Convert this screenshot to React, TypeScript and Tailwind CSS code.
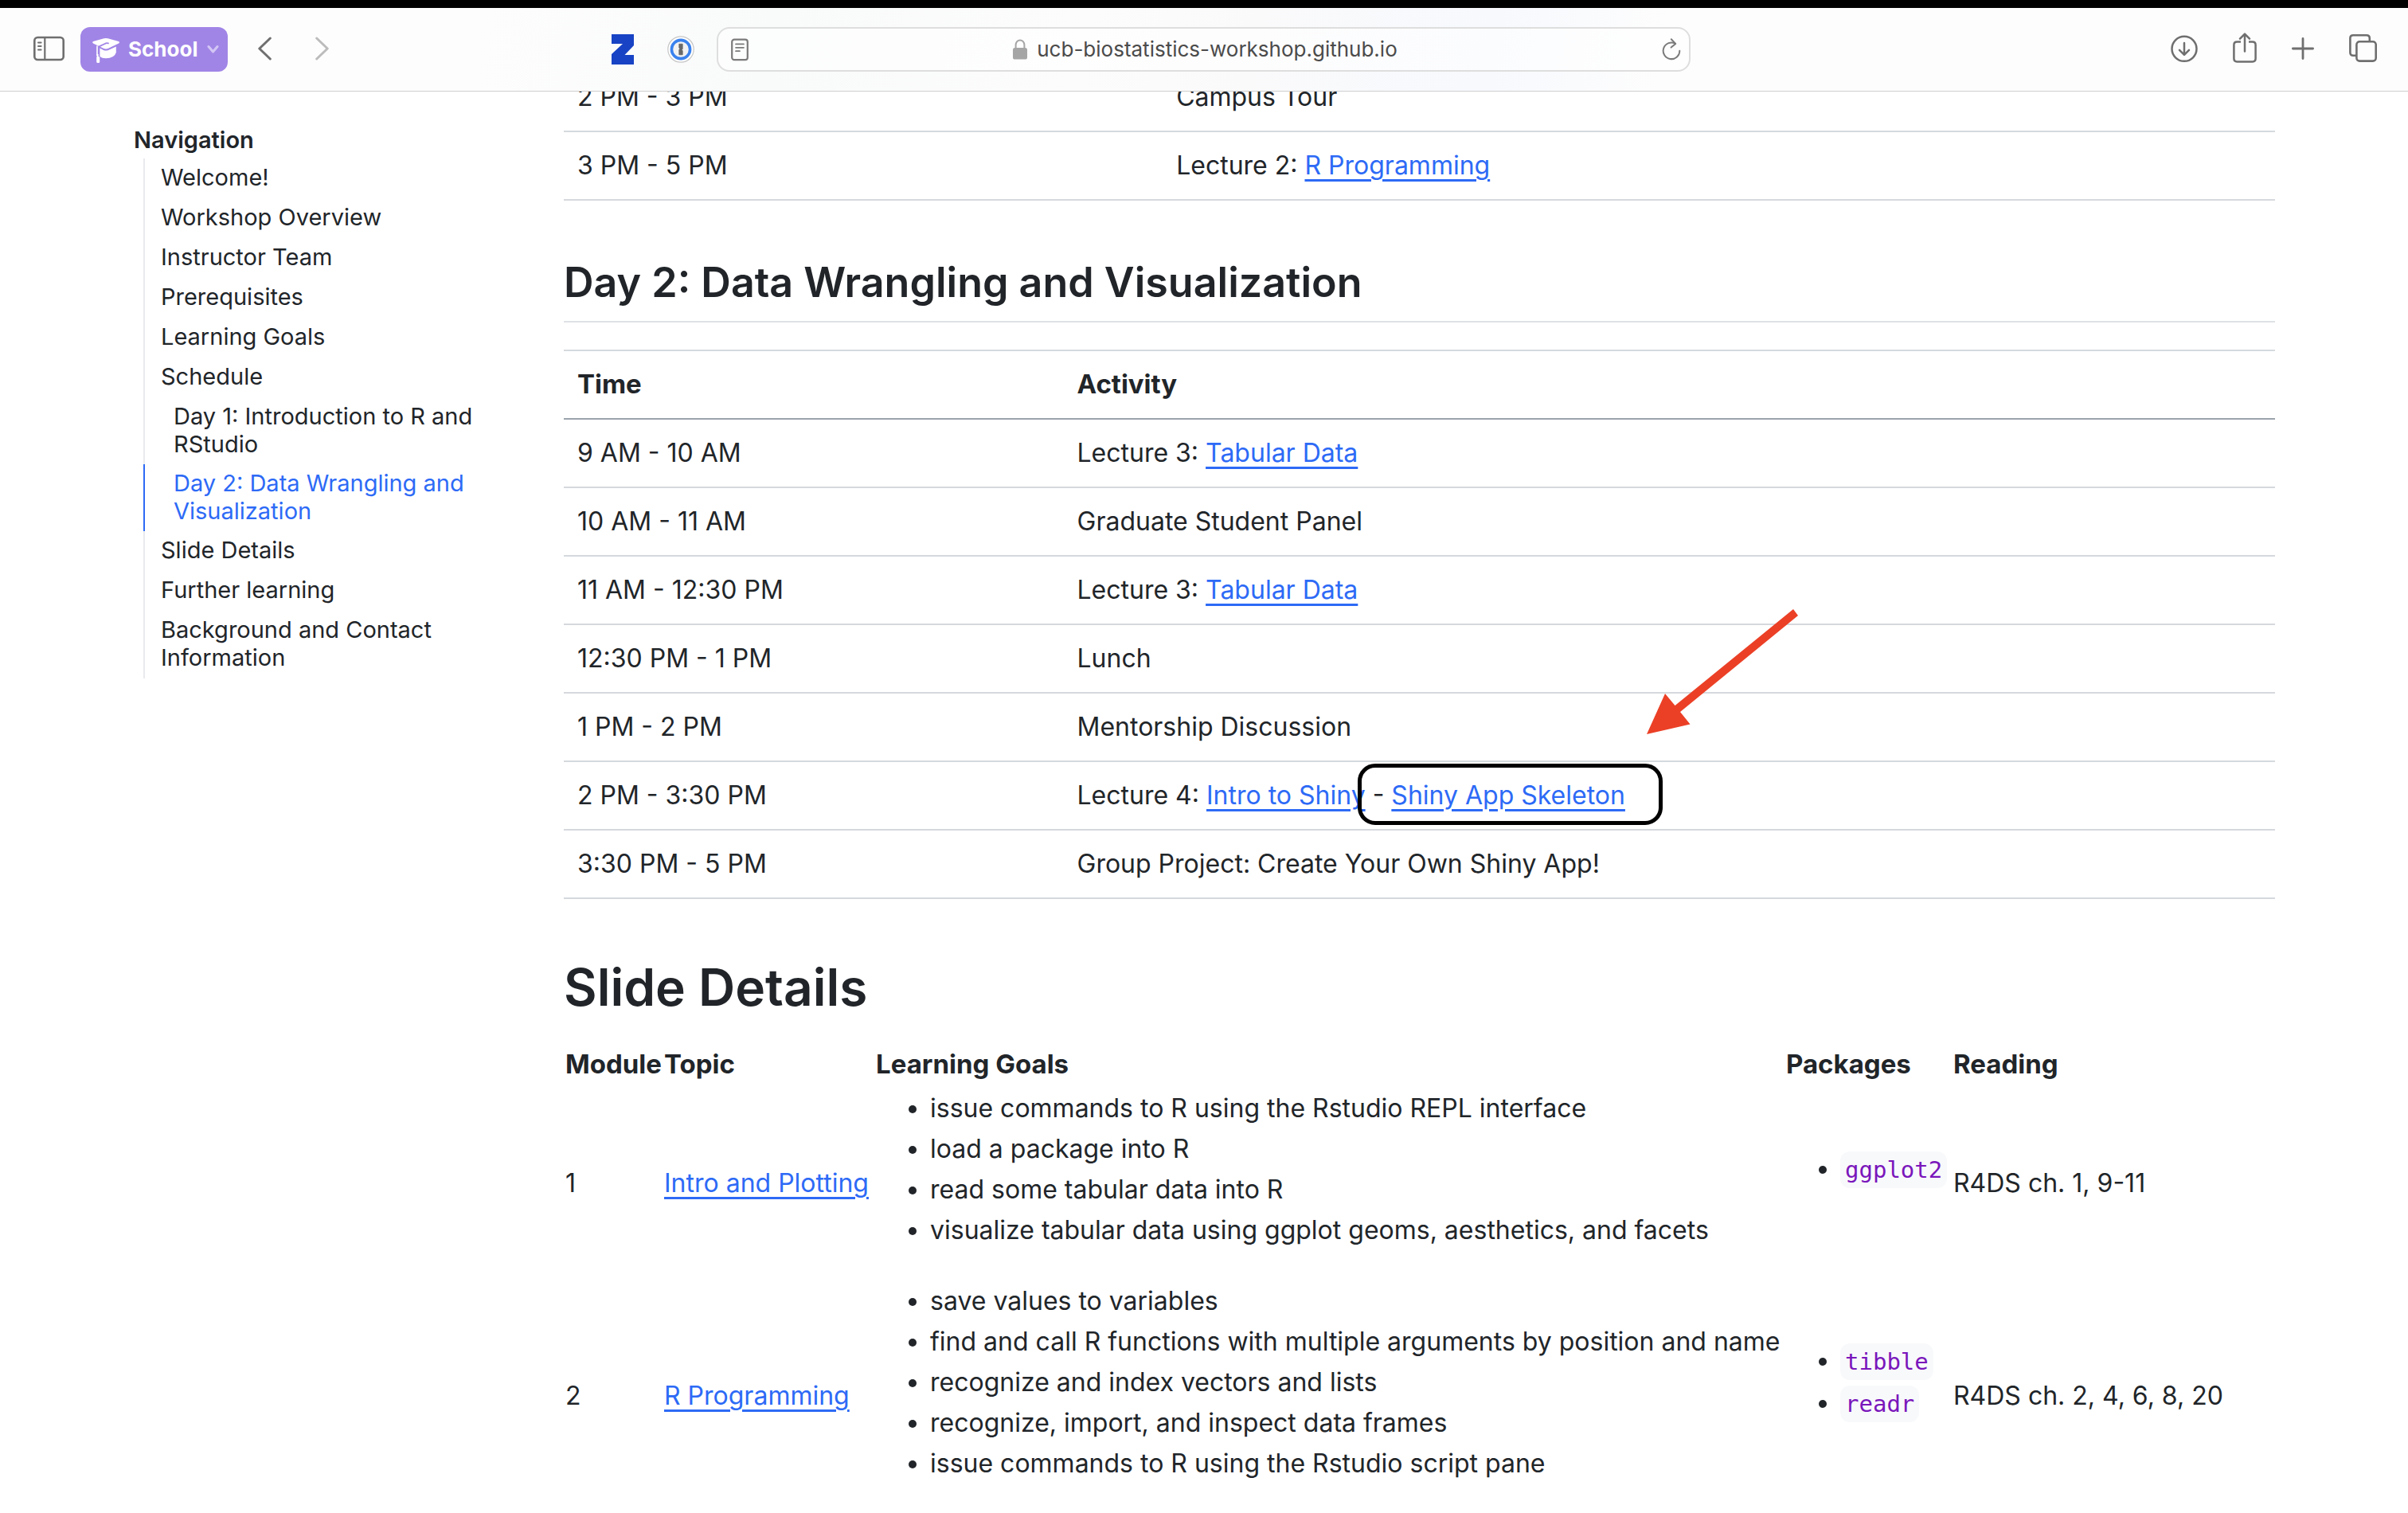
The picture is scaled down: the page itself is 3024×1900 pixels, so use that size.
import type { ReactNode } from "react";

const linkClass =
  "text-[#2d6af6] underline decoration-[3px] underline-offset-[6px]";

function Link({ children }: { children: ReactNode }) {
  return (
    <a href="#" className={linkClass}>
      {children}
    </a>
  );
}

/* ---------- toolbar icons ---------- */

function SidebarIcon() {
  return (
    <svg width="39" height="40" viewBox="0 0 39 40" fill="none" stroke="#6f6f6f" strokeLinecap="round">
      <rect x="1.3" y="5" width="36.4" height="28" rx="4" strokeWidth="2.6" />
      <path d="M14.3 5v28" strokeWidth="2.2" />
      <path d="M6 11.4h3.6M6 16h3.6M6 20.6h3.6" strokeWidth="2" />
    </svg>
  );
}

function GraduationIcon() {
  return (
    <svg width="34" height="40" viewBox="0 0 34 40" fill="none">
      <path d="M1 12.4Q-.6 11 1 9.9L14.5 6.3Q17 5.6 19.5 6.3L33 9.9Q34.8 11 33 12.6L20 18.8Q17 20.2 14 18.8Z" fill="#fff" />
      <path d="M9.4 18.6L14 20.9Q17 22.3 20 20.9L29.8 16.4V24Q27.5 31.2 17 31.2Q12 31.2 9.4 29Z" fill="#fff" />
      <path d="M20 12.4Q17.6 11.6 15.6 13L8 16.6" stroke="#a185e6" strokeWidth="1.8" strokeLinecap="round" />
      <path d="M6 15.6V28" stroke="#fff" strokeWidth="1.6" />
      <rect x="5.2" y="29" width="4" height="8" rx="1.6" fill="#fff" />
      <path d="M6.6 26v4" stroke="#fff" strokeWidth="2" />
    </svg>
  );
}

function SmallChevron() {
  return (
    <svg width="15" height="12" viewBox="0 0 15 12" fill="none" stroke="#d3c6f5" strokeWidth="3" strokeLinecap="round" strokeLinejoin="round">
      <path d="M2 2.5l5.5 6.5L13 2.5" />
    </svg>
  );
}

function BackIcon() {
  return (
    <svg width="17" height="40" viewBox="0 0 17 40" fill="none" stroke="#6f6f6f" strokeWidth="3" strokeLinecap="round" strokeLinejoin="round">
      <path d="M15.3 6L1.8 19L15.3 32" />
    </svg>
  );
}

function ForwardIcon() {
  return (
    <svg width="17" height="40" viewBox="0 0 17 40" fill="none" stroke="#bcbcbc" strokeWidth="3" strokeLinecap="round" strokeLinejoin="round">
      <path d="M1.7 6L15.2 19L1.7 32" />
    </svg>
  );
}

function ZLogo() {
  return (
    <svg width="28" height="38" viewBox="0 0 28 38" fill="#1843c4">
      <path d="M0 0H28V14L16.5 26H28V38H0V25L14 12H0Z" />
    </svg>
  );
}

function KeyholeLogo() {
  return (
    <svg width="34" height="34" viewBox="0 0 34 34">
      <circle cx="17" cy="17" r="16.2" fill="#fff" stroke="#c6c6c6" strokeWidth="1.2" />
      <circle cx="17" cy="17" r="11.6" fill="#f2f2f2" stroke="#3a82ee" strokeWidth="3.6" />
      <path d="M14.8 10.2H19.2V16.4L18.2 17.6L19.2 18.8V23.8H14.8V17.4L15.8 16.2L14.8 15Z" fill="#6a6a6a" stroke="#505050" strokeWidth=".6" />
    </svg>
  );
}

function ReaderIcon() {
  return (
    <svg width="22" height="40" viewBox="0 0 22 40" fill="none" stroke="#7b7b7b" strokeLinecap="round">
      <rect x="1.2" y="7.6" width="19.6" height="25.6" rx="3" strokeWidth="2.2" />
      <path d="M6 13.4h10M6 17.8h10M6 22.2h5" strokeWidth="1.7" />
    </svg>
  );
}

function LockIcon() {
  return (
    <svg width="18" height="26" viewBox="0 0 18 26">
      <path d="M3.6 12V7.4a5.4 6 0 0 1 10.8 0V12" fill="none" stroke="#a5a5a5" strokeWidth="2" />
      <rect x="0" y="11" width="18" height="14.6" rx="2.6" fill="#a5a5a5" />
    </svg>
  );
}

function ReloadIcon() {
  return (
    <svg width="24" height="40" viewBox="0 0 24 40" fill="none" stroke="#7b7b7b" strokeWidth="2" strokeLinecap="round" strokeLinejoin="round">
      <path d="M17 12.8A10.3 10.3 0 1 0 22.3 21.8" />
      <path d="M11.8 7.2L17.2 12.9L11.6 17.6" />
    </svg>
  );
}

function DownloadIcon() {
  return (
    <svg width="34" height="40" viewBox="0 0 34 40" fill="none" stroke="#6f6f6f" strokeWidth="2.5" strokeLinecap="round" strokeLinejoin="round">
      <circle cx="17" cy="19.3" r="15.5" />
      <path d="M17 12v14.4M11 20.8l6 6l6-6" />
    </svg>
  );
}

function ShareIcon() {
  return (
    <svg width="30" height="42" viewBox="0 0 30 42" fill="none" stroke="#6f6f6f" strokeWidth="2.5" strokeLinecap="round" strokeLinejoin="round">
      <path d="M10 11.6H5.2Q1.4 11.6 1.4 15.4V32.6Q1.4 36.4 5.2 36.4H24.8Q28.6 36.4 28.6 32.6V15.4Q28.6 11.6 24.8 11.6H20" strokeLinecap="butt" />
      <path d="M15 23.6V2.4M9 7.6L15 1.6L21 7.6" />
    </svg>
  );
}

function PlusIcon() {
  return (
    <svg width="28" height="40" viewBox="0 0 28 40" fill="none" stroke="#6f6f6f" strokeWidth="2.8" strokeLinecap="round">
      <path d="M14 6.4v25.2M1.4 19h25.2" />
    </svg>
  );
}

function TabsIcon() {
  return (
    <svg width="35" height="40" viewBox="0 0 35 40" fill="none" stroke="#6f6f6f" strokeWidth="2.6">
      <path d="M9 27.7H5.2Q1.4 27.7 1.4 23.9V6.1Q1.4 2.3 5.2 2.3H22Q25.8 2.3 25.8 6.1V10" />
      <rect x="9.4" y="10.3" width="24.3" height="24.3" rx="3.8" />
    </svg>
  );
}

function Toolbar() {
  return (
    <header className="shrink-0 border-t-10 border-b border-t-black border-b-[#cfcfcf]">
      <div className="grid h-[104px] grid-cols-[900fr_1223fr_901fr] items-center bg-[linear-gradient(100deg,#fdfdfd_20%,#f9fafa_32%,#fcfcfc_45%,#fafafb_52%,#f7f9fd_62%,#fdfdfd_69%)]">
        <div className="flex items-center justify-between pr-7 pl-[42px]">
          <div className="flex items-center">
            <button type="button" aria-label="Toggle sidebar">
              <SidebarIcon />
            </button>
            <button
              type="button"
              className="ml-5 flex h-14 w-[185px] items-center rounded-xl bg-[#a185e6] pr-[11px] pl-[15px] text-[26px] font-bold text-white"
            >
              <GraduationIcon />
              <span className="ml-[11px] flex-1 pb-0.5 text-left">School</span>
              <SmallChevron />
            </button>
            <button type="button" aria-label="Back" className="ml-[38px]">
              <BackIcon />
            </button>
            <button type="button" aria-label="Forward" className="ml-[55px]">
              <ForwardIcon />
            </button>
          </div>
          <div className="flex items-center gap-[42px]">
            <button type="button" aria-label="Z extension">
              <ZLogo />
            </button>
            <button type="button" aria-label="Password manager">
              <KeyholeLogo />
            </button>
          </div>
        </div>

        <div className="flex h-14 items-center justify-between rounded-2xl border-2 border-[#dedede] bg-white/50 pr-[10px] pl-4">
          <button type="button" aria-label="Show reader">
            <ReaderIcon />
          </button>
          <label className="flex items-center gap-3">
            <LockIcon />
            <input
              type="text"
              aria-label="Address"
              defaultValue="ucb-biostatistics-workshop.github.io"
              className="field-sizing-content bg-transparent text-[26px] leading-9 text-[#4b4b4b] outline-none"
            />
          </label>
          <button type="button" aria-label="Reload">
            <ReloadIcon />
          </button>
        </div>

        <div className="flex items-center justify-end gap-11 pr-[39px]">
          <button type="button" aria-label="Downloads">
            <DownloadIcon />
          </button>
          <button type="button" aria-label="Share">
            <ShareIcon />
          </button>
          <button type="button" aria-label="New tab">
            <PlusIcon />
          </button>
          <button type="button" aria-label="Tab overview">
            <TabsIcon />
          </button>
        </div>
      </div>
    </header>
  );
}

/* ---------- side navigation ---------- */

type NavItem = { label: string; nested?: boolean; active?: boolean };

const navItems: NavItem[] = [
  { label: "Welcome!" },
  { label: "Workshop Overview" },
  { label: "Instructor Team" },
  { label: "Prerequisites" },
  { label: "Learning Goals" },
  { label: "Schedule" },
  { label: "Day 1: Introduction to R and RStudio", nested: true },
  { label: "Day 2: Data Wrangling and Visualization", nested: true, active: true },
  { label: "Slide Details" },
  { label: "Further learning" },
  { label: "Background and Contact Information" },
];

function SideNav() {
  return (
    <nav aria-labelledby="nav-title" className="pt-10 text-[29px]">
      <h2 id="nav-title" className="mb-0.5 leading-[42px] font-semibold">
        Navigation
      </h2>
      <ul className="ml-3 leading-[35px]">
        {navItems.map((item) => (
          <li
            key={item.label}
            className={
              item.active
                ? "border-l-2 border-[#2d6af6] text-[#2d6af6]"
                : "border-l-2 border-[#e9eaee]"
            }
          >
            <a href="#" className={item.nested ? "block pt-1.5 pb-2 pl-9" : "block pt-1.5 pb-[9px] pl-5"}>
              {item.label}
            </a>
          </li>
        ))}
      </ul>
    </nav>
  );
}

/* ---------- schedule tables ---------- */

type Slot = { time: string; activity: ReactNode };

const dayOne: Slot[] = [
  { time: "2 PM - 3 PM", activity: "Campus Tour" },
  { time: "3 PM - 5 PM", activity: <>Lecture 2: <Link>R Programming</Link></> },
];

/* Hand-drawn callout: a rounded frame round the link and an arrow to it. */
function Callout() {
  return (
    <>
      <span className="pointer-events-none absolute top-0.5 left-[369px] h-[77px] w-[383px] rounded-[22px] border-5 border-black" />
      <svg
        className="pointer-events-none absolute -top-48 left-[732px]"
        width="190"
        height="158"
        viewBox="0 0 190 158"
        fill="#eb4026"
      >
        <path d="M0 157L23 106L35.5 121L184 0L190 8L42 129L54.5 144.5Z" />
      </svg>
    </>
  );
}

const dayTwo: Slot[] = [
  { time: "9 AM - 10 AM", activity: <>Lecture 3: <Link>Tabular Data</Link></> },
  { time: "10 AM - 11 AM", activity: "Graduate Student Panel" },
  { time: "11 AM - 12:30 PM", activity: <>Lecture 3: <Link>Tabular Data</Link></> },
  { time: "12:30 PM - 1 PM", activity: "Lunch" },
  { time: "1 PM - 2 PM", activity: "Mentorship Discussion" },
  {
    time: "2 PM - 3:30 PM",
    activity: (
      <>
        Lecture 4: <Link>Intro to Shiny</Link> - <Link>Shiny App Skeleton</Link>
        <Callout />
      </>
    ),
  },
  { time: "3:30 PM - 5 PM", activity: "Group Project: Create Your Own Shiny App!" },
];

function SlotRows({ slots }: { slots: Slot[] }) {
  return (
    <tbody>
      {slots.map((slot) => (
        <tr key={slot.time} className="border-b-2 border-[#d5d9dd]">
          <td className="p-[17px]">{slot.time}</td>
          <td className="relative p-[17px]">{slot.activity}</td>
        </tr>
      ))}
    </tbody>
  );
}

/* ---------- slide details ---------- */

const modules = [
  {
    id: 1,
    topic: "Intro and Plotting",
    goals: [
      "issue commands to R using the Rstudio REPL interface",
      "load a package into R",
      "read some tabular data into R",
      "visualize tabular data using ggplot geoms, aesthetics, and facets",
    ],
    packages: ["ggplot2"],
    reading: "R4DS ch. 1, 9-11",
  },
  {
    id: 2,
    topic: "R Programming",
    goals: [
      "save values to variables",
      "find and call R functions with multiple arguments by position and name",
      "recognize and index vectors and lists",
      "recognize, import, and inspect data frames",
      "issue commands to R using the Rstudio script pane",
    ],
    packages: ["tibble", "readr"],
    reading: "R4DS ch. 2, 4, 6, 8, 20",
  },
];

function SlideTable() {
  return (
    <table className="w-full table-fixed leading-[51px] whitespace-nowrap">
      <colgroup>
        <col className="w-[124px]" />
        <col className="w-[266px]" />
        <col className="w-[1143px]" />
        <col className="w-[210px]" />
        <col />
      </colgroup>
      <thead>
        <tr className="text-left text-[33px]">
          <th className="p-0.5">Module</th>
          <th className="p-0.5">Topic</th>
          <th className="p-0.5">Learning Goals</th>
          <th className="p-0.5">Packages</th>
          <th className="p-0.5">Reading</th>
        </tr>
      </thead>
      <tbody>
        {modules.map((m) => (
          <tr key={m.id}>
            <td className="p-0.5">{m.id}</td>
            <td className="p-0.5">
              <Link>{m.topic}</Link>
            </td>
            <td className="p-0.5">
              <ul className="mb-[34px] list-disc pl-[68px]">
                {m.goals.map((goal) => (
                  <li key={goal}>{goal}</li>
                ))}
              </ul>
            </td>
            <td className="p-0.5">
              <ul className="mb-[34px] list-disc pl-[68px]">
                {m.packages.map((name) => (
                  <li key={name}>
                    <code className="rounded-xl bg-[#f8f9fb] p-[6px] font-['DejaVu_Sans_Mono',monospace] text-[29px] text-[#7a16bb]">
                      {name}
                    </code>
                  </li>
                ))}
              </ul>
            </td>
            <td className="p-0.5">{m.reading}</td>
          </tr>
        ))}
      </tbody>
    </table>
  );
}

export default function App() {
  return (
    <div className="flex h-screen flex-col overflow-hidden bg-white font-['Inter',sans-serif] text-[#212529]">
      <Toolbar />
      <div className="grid min-h-0 flex-1 grid-cols-[460px_1fr] gap-x-20 overflow-hidden pr-[167px] pl-[168px]">
        <SideNav />
        <main className="-mt-[35px] text-[32px] leading-[50px]">
          <table className="w-full table-fixed">
            <colgroup>
              <col className="w-[35%]" />
              <col />
            </colgroup>
            <SlotRows slots={dayOne} />
          </table>

          <h2 className="mt-[71px] mb-[34px] border-b-2 border-[#dee2e6] pb-4 text-[52px] leading-[64px] font-semibold">
            Day 2: Data Wrangling and Visualization
          </h2>
          <table className="w-full table-fixed">
            <colgroup>
              <col className="w-[29.2%]" />
              <col />
            </colgroup>
            <thead>
              <tr className="border-t-2 border-b-2 border-t-[#d5d9dd] border-b-[#9aa3ab] text-left text-[33px]">
                <th className="px-[17px] pt-4 pb-[18px]">Time</th>
                <th className="px-[17px] pt-4 pb-[18px]">Activity</th>
              </tr>
            </thead>
            <SlotRows slots={dayTwo} />
          </table>

          <h1 className="mt-[72px] mb-[30px] text-[64px] leading-[78px] font-semibold">Slide Details</h1>
          <SlideTable />
        </main>
      </div>
    </div>
  );
}
